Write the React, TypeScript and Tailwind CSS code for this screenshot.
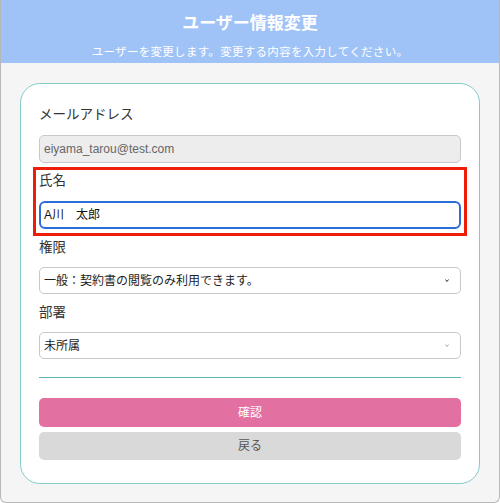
import React from "react";

const font = {
  fontFamily: '"Liberation Sans", "Noto Sans CJK JP", sans-serif',
};

function Chevron({ tone }: { tone: string }) {
  return (
    <svg width="4" height="3" viewBox="0 0 4 3" className="shrink-0">
      <path d="M0.5 0.5 L2 2.5 L3.5 0.5" fill="none" stroke={tone} strokeWidth="1" />
    </svg>
  );
}

function SelectBox({ value, tone }: { value: string; tone: string }) {
  return (
    <div className="mt-[9px] flex h-[27px] items-center justify-between rounded-[5px] border border-[#c8c8c8] bg-white pl-[4px] pr-[11px] text-[12px] text-[#222]">
      <span>{value}</span>
      <Chevron tone={tone} />
    </div>
  );
}

export default function App() {
  return (
    <div
      className="flex h-[503px] w-[500px] flex-col overflow-hidden rounded-b-[6px] border-x border-b border-[#b8b8b8] bg-[#f5f5f5]"
      style={font}
    >
      <header className="flex h-[63px] shrink-0 flex-col items-center bg-[#9fc3f7] pt-[12px] text-white">
        <h1 className="h-[24px] text-[17px] font-bold leading-[24px]">
          ユーザー情報変更
        </h1>
        <p className="mt-[8px] h-[16px] text-[11.5px] leading-[16px] tracking-[0.3px]">
          ユーザーを変更します。変更する内容を入力してください。
        </p>
      </header>

      <main className="mx-[19px] mt-[20px] flex flex-col rounded-[20px] border border-[#86cccc] bg-white px-[18px] pb-[23px] pt-[21px]">
        <label className="h-[20px] text-[13.5px] leading-[20px] text-[#333]">
          メールアドレス
        </label>
        <div className="mt-[10px] flex h-[28px] items-center rounded-[5px] border border-[#c8c8c8] bg-[#ededed] px-[4px] text-[12px] text-[#666]">
          eiyama_tarou@test.com
        </div>

        <div className="-mx-[6px] mt-[4px] border-[3px] border-[#ee1d0a] px-[3px] pb-[4px] pt-[1px]">
          <label className="block h-[20px] text-[13.5px] leading-[20px] text-[#333]">
            氏名
          </label>
          <div className="mt-[10px] flex h-[28px] items-center rounded-[6px] border-2 border-[#2d6cd8] bg-white px-[3px] text-[12px] text-[#111]">
            A川　太郎
          </div>
        </div>

        <label className="mt-[2px] h-[20px] text-[13.5px] leading-[20px] text-[#333]">
          権限
        </label>
        <SelectBox value="一般：契約書の閲覧のみ利用できます。" tone="#333" />

        <label className="mt-[9px] h-[20px] text-[13.5px] leading-[20px] text-[#333]">
          部署
        </label>
        <SelectBox value="未所属" tone="#aaa" />

        <hr className="mt-[18px] border-t border-[#5db3b3]" />

        <button
          type="button"
          className="mt-[20px] h-[29px] rounded-[5px] bg-[#e270a0] text-[12px] text-white"
        >
          確認
        </button>
        <button
          type="button"
          className="mt-[5px] h-[28px] rounded-[5px] bg-[#d9d9d9] text-[12px] text-[#555]"
        >
          戻る
        </button>
      </main>
    </div>
  );
}
